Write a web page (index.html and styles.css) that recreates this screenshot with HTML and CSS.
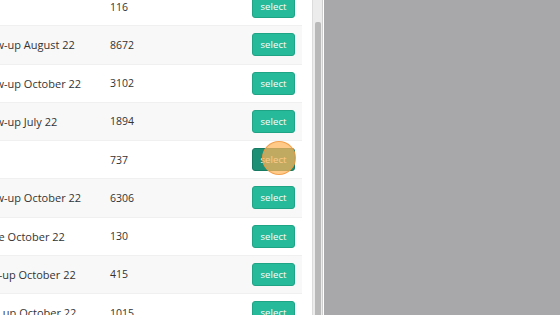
FILE: index.html
```html
<!DOCTYPE html>
<html>
<head>
<meta charset="utf-8">
<link rel="stylesheet" href="styles.css">
</head>
<body>
<div class="screen">
  <div class="panel">
    <div class="table">
      <div class="row"><div class="name">List</div><div class="num">116</div><div class="act"><span class="btn">select</span></div></div>
      <div class="row alt"><div class="name">Follow-up August 22</div><div class="num">8672</div><div class="act"><span class="btn">select</span></div></div>
      <div class="row"><div class="name">Follow-up October 22</div><div class="num">3102</div><div class="act"><span class="btn">select</span></div></div>
      <div class="row alt"><div class="name">Follow-up July 22</div><div class="num">1894</div><div class="act"><span class="btn">select</span></div></div>
      <div class="row"><div class="name">Test</div><div class="num">737</div><div class="act"><span class="btn hover">select<span class="cursor"></span></span></div></div>
      <div class="row alt"><div class="name">Follow-up October 22</div><div class="num">6306</div><div class="act"><span class="btn">select</span></div></div>
      <div class="row"><div class="name">Future October 22</div><div class="num">130</div><div class="act"><span class="btn">select</span></div></div>
      <div class="row alt"><div class="name">Grow-up October 22</div><div class="num">415</div><div class="act"><span class="btn">select</span></div></div>
      <div class="row"><div class="name">Catch up October 22</div><div class="num">1015</div><div class="act"><span class="btn">select</span></div></div>
    </div>
    <div class="scroll"><div class="thumb"></div></div>
  </div>
  <div class="backdrop"></div>
</div>
</body>
</html>
```
FILE: styles.css
```css
html, body {
  margin: 0;
  padding: 0;
  width: 560px;
  height: 315px;
  overflow: hidden;
  background: #a8a8aa;
}
.screen {
  display: flex;
  width: 560px;
  height: 315px;
  overflow: hidden;
}
.panel {
  display: flex;
  width: 324px;
  flex: 0 0 324px;
  background: #ffffff;
  overflow: hidden;
}
.table {
  width: 302px;
  flex: 0 0 302px;
  margin-top: -13px;
  overflow: hidden;
  font-family: "Open Sans", "Noto Sans", sans-serif;
  font-size: 11px;
  color: #333333;
}
.row {
  display: flex;
  align-items: center;
  height: 38.25px;
  box-sizing: border-box;
  border-top: 1px solid #f0f0f0;
  background: #ffffff;
}
.row.alt {
  background: #f8f8f8;
}
.name {
  flex: 0 0 139px;
  margin-left: -29px;
  white-space: nowrap;
  overflow: hidden;
}
.num {
  flex: 1 1 auto;
  font-size: 10.5px;
}
.act {
  flex: 0 0 auto;
  padding-right: 7px;
}
.btn {
  position: relative;
  display: flex;
  align-items: center;
  justify-content: center;
  width: 43px;
  height: 23px;
  box-sizing: border-box;
  border-radius: 3px;
  background: #26b99a;
  border: 1px solid #1fa486;
  color: #ffffff;
  font-size: 9.5px;
  letter-spacing: 0.1px;
}
.btn.hover {
  background: #1d8f75;
  border-color: #167a63;
}
.cursor {
  position: absolute;
  left: 9px;
  top: -8px;
  width: 34px;
  height: 34px;
  border-radius: 50%;
  background: rgba(255, 180, 90, 0.72);
  border: 1px solid rgba(240, 150, 60, 0.8);
  box-sizing: border-box;
}
.scroll {
  flex: 0 0 11px;
  margin-left: 10px;
  background: #ececec;
  border-left: 1px solid #dcdcdc;
  border-right: 1px solid #cfcfcf;
  box-sizing: border-box;
  padding: 22px 1px 0 2px;
}
.thumb {
  height: 400px;
  background: #b9b9b9;
  border-radius: 2px;
}
.backdrop {
  flex: 1 1 auto;
  background: #a8a8aa;
}
```
